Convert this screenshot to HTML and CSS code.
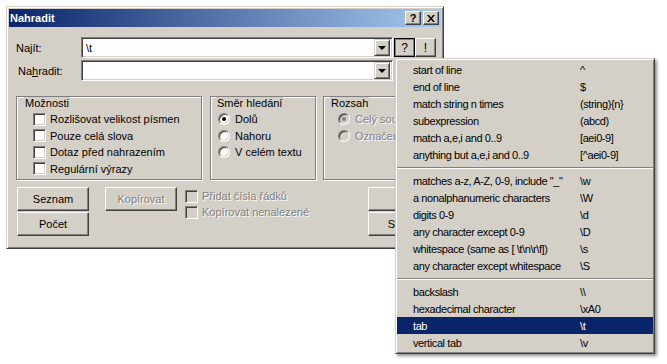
FILE: index.html
```html
<!DOCTYPE html>
<html lang="cs">
  <head>
    <meta charset="UTF-8" />
    <meta name="viewport" content="width=device-width, initial-scale=1.0" />
    <title>Nahradit</title>
    <link rel="stylesheet" href="styles.css">
  </head>
  <body>
    <div class="dialog">
      <div class="titlebar">
        <span class="title">Nahradit</span>
        <div class="tb-buttons">
          <span class="tb-btn">?</span>
          <span class="tb-btn">
            <svg width="8" height="7" viewBox="0 0 8 7">
              <path d="M0 0h2l2 2.5 2-2.5h2l-3 3.5 3 3.5h-2l-2-2.5-2 2.5h-2l3-3.5z" fill="#000"/>
            </svg>
          </span>
        </div>
      </div>

      <div class="dlg-body">
        <div class="field-row">
          <span class="field-label">Najít:</span>
          <div class="combo">
            <span class="combo-text">\t</span>
            <span class="drop-btn"><span class="arrow"></span></span>
          </div>
          <span class="btn btn-small pressed">?</span>
          <span class="btn btn-small">!</span>
        </div>
        <div class="field-row">
          <span class="field-label second">Na<u>h</u>radit:</span>
          <div class="combo">
            <span class="combo-text"></span>
            <span class="drop-btn"><span class="arrow"></span></span>
          </div>
        </div>

        <div class="groups">
          <div class="group g-options">
            <span class="legend">Možnosti</span>
            <div class="opt-list">
              <div class="opt"><span class="check"></span>Rozlišovat velikost písmen</div>
              <div class="opt"><span class="check"></span>Pouze celá slova</div>
              <div class="opt"><span class="check"></span>Dotaz před nahrazením</div>
              <div class="opt"><span class="check"></span>Regulární výrazy</div>
            </div>
          </div>
          <div class="group g-direction">
            <span class="legend">Směr hledání</span>
            <div class="opt-list">
              <div class="opt"><span class="radio checked"></span>Dolů</div>
              <div class="opt"><span class="radio"></span>Nahoru</div>
              <div class="opt"><span class="radio"></span>V celém textu</div>
            </div>
          </div>
          <div class="group g-scope">
            <span class="legend">Rozsah</span>
            <div class="opt-list">
              <div class="opt disabled"><span class="radio checked"></span>Celý soubor</div>
              <div class="opt disabled"><span class="radio"></span>Označený text</div>
            </div>
          </div>
        </div>

        <div class="bottom-row">
          <div class="btn-col">
            <span class="btn">Seznam</span>
            <span class="btn">Počet</span>
          </div>
          <span class="btn disabled copy-btn">Kopírovat</span>
          <div class="copy-opts">
            <div class="opt disabled"><span class="check"></span>Přidat čísla řádků</div>
            <div class="opt disabled"><span class="check"></span>Kopírovat nenalezené</div>
          </div>
          <div class="btn-col right-col">
            <span class="btn">OK</span>
            <span class="btn">Storno</span>
          </div>
        </div>
      </div>
    </div>

    <div class="popup-menu">
      <div class="menu-item"><span>start of line</span><span>^</span></div>
      <div class="menu-item"><span>end of line</span><span>$</span></div>
      <div class="menu-item"><span>match string n times</span><span>(string){n}</span></div>
      <div class="menu-item"><span>subexpression</span><span>(abcd)</span></div>
      <div class="menu-item"><span>match a,e,i and 0..9</span><span>[aei0-9]</span></div>
      <div class="menu-item"><span>anything but a,e,i and 0..9</span><span>[^aei0-9]</span></div>
      <div class="menu-sep"></div>
      <div class="menu-item"><span>matches a-z, A-Z, 0-9, include "_"</span><span>\w</span></div>
      <div class="menu-item"><span>a nonalphanumeric characters</span><span>\W</span></div>
      <div class="menu-item"><span>digits 0-9</span><span>\d</span></div>
      <div class="menu-item"><span>any character except 0-9</span><span>\D</span></div>
      <div class="menu-item"><span>whitespace (same as [ \t\n\r\f])</span><span>\s</span></div>
      <div class="menu-item"><span>any character except whitespace</span><span>\S</span></div>
      <div class="menu-sep"></div>
      <div class="menu-item"><span>backslash</span><span>\\</span></div>
      <div class="menu-item"><span>hexadecimal character</span><span>\xA0</span></div>
      <div class="menu-item active"><span>tab</span><span>\t</span></div>
      <div class="menu-item"><span>vertical tab</span><span>\v</span></div>
    </div>
  </body>
</html>
```

FILE: styles.css
```css
* {
  margin: 0;
  padding: 0;
  box-sizing: border-box;
}

body {
  background: #fff;
  font-family: "Liberation Sans", Arial, sans-serif;
  font-size: 11px;
  color: #000;
  width: 667px;
  height: 364px;
  overflow: hidden;
  padding: 6px 0 0 6px;
}

/* window frame */
.dialog {
  width: 438px;
  height: 243px;
  background: #d4d0c8;
  border: 1px solid;
  border-color: #d4d0c8 #404040 #404040 #d4d0c8;
  box-shadow: inset 1px 1px #fff, inset -1px -1px #808080;
  padding: 2px;
}

.titlebar {
  height: 18px;
  background: linear-gradient(to right, #0a246a, #a6caf0);
  display: flex;
  align-items: center;
  justify-content: space-between;
  padding: 0 2px 0 1px;
}

.title {
  color: #fff;
  font-weight: bold;
  font-size: 11px;
}

.tb-buttons {
  display: flex;
  gap: 2px;
}

.tb-btn {
  width: 16px;
  height: 14px;
  display: flex;
  align-items: center;
  justify-content: center;
  background: #d4d0c8;
  border: 1px solid;
  border-color: #fff #404040 #404040 #fff;
  box-shadow: inset -1px -1px #808080;
  font-weight: bold;
  font-size: 11px;
  line-height: 1;
}

.dlg-body {
  padding: 10px 0 0 7px;
}

.field-row {
  display: flex;
  align-items: center;
  height: 21px;
  margin-bottom: 2px;
}

.field-label {
  width: 65px;
}

.field-label.second {
  padding-left: 2px;
}

.combo {
  width: 312px;
  height: 21px;
  display: flex;
  align-items: center;
  background: #fff;
  border: 1px solid;
  border-color: #808080 #fff #fff #808080;
  box-shadow: inset 1px 1px #404040, inset -1px -1px #d4d0c8;
  padding: 2px 2px 2px 4px;
}

.combo-text {
  flex: 1;
}

.drop-btn {
  width: 16px;
  height: 17px;
  display: flex;
  align-items: center;
  justify-content: center;
  background: #d4d0c8;
  border: 1px solid;
  border-color: #d4d0c8 #404040 #404040 #d4d0c8;
  box-shadow: inset 1px 1px #fff, inset -1px -1px #808080;
}

.arrow {
  width: 0;
  height: 0;
  border-left: 4px solid transparent;
  border-right: 4px solid transparent;
  border-top: 4px solid #000;
  margin-top: 1px;
}

.btn {
  display: flex;
  align-items: center;
  justify-content: center;
  width: 72px;
  height: 24px;
  background: #d4d0c8;
  border: 1px solid;
  border-color: #fff #404040 #404040 #fff;
  box-shadow: inset -1px -1px #808080;
}

.btn-small {
  width: 21px;
  height: 19px;
  font-size: 12px;
}

.btn-small.pressed {
  margin-left: 1px;
  border-color: #000;
  box-shadow: inset 1px 1px #808080, inset -1px -1px #808080;
}

.btn.disabled {
  color: #808080;
  text-shadow: 1px 1px #fff;
}

/* group boxes */
.groups {
  display: flex;
  margin-top: 15px;
  height: 85px;
}

.group {
  height: 84px;
  border: 1px solid #808080;
  box-shadow: 1px 1px #fff, inset 1px 1px #fff;
}

.g-options {
  width: 186px;
  padding-left: 16px;
}

.g-direction {
  width: 106px;
  margin-left: 8px;
  padding-left: 7px;
}

.g-scope {
  width: 113px;
  margin-left: 7px;
  padding-left: 14px;
  overflow: hidden;
}

.legend {
  display: inline-block;
  background: #d4d0c8;
  height: 13px;
  line-height: 13px;
  margin-top: -7px;
  padding: 0 1px;
  position: relative;
}

.g-options .legend {
  margin-left: -9px;
}

.g-direction .legend {
  margin-left: -2px;
}

.g-scope .legend {
  margin-left: -8px;
}

.opt-list {
  margin-top: 1px;
}

.opt {
  display: flex;
  align-items: center;
  height: 16.5px;
  white-space: nowrap;
}

.opt.disabled {
  color: #808080;
  text-shadow: 1px 1px #fff;
}

.check {
  width: 13px;
  height: 13px;
  margin-right: 4px;
  background: #fff;
  border: 1px solid;
  border-color: #808080 #fff #fff #808080;
  box-shadow: inset 1px 1px #404040, inset -1px -1px #d4d0c8;
  flex: none;
}

.opt.disabled .check {
  background: #d4d0c8;
}

.radio {
  width: 12px;
  height: 12px;
  margin-right: 5px;
  border-radius: 50%;
  background: #fff;
  border: 1px solid;
  border-color: #808080 #fff #fff #808080;
  box-shadow: inset 1px 1px #404040, inset -1px -1px #d4d0c8;
  display: flex;
  align-items: center;
  justify-content: center;
  flex: none;
}

.radio.checked::after {
  content: "";
  width: 4px;
  height: 4px;
  border-radius: 50%;
  background: #000;
}

.opt.disabled .radio {
  background: #d4d0c8;
}

.opt.disabled .radio.checked::after {
  background: #808080;
}

/* bottom buttons */
.bottom-row {
  display: flex;
  margin-top: 6px;
  padding-left: 1px;
}

.btn-col {
  display: flex;
  flex-direction: column;
  gap: 1px;
}

.copy-btn {
  margin-left: 16px;
}

.copy-opts {
  margin-left: 8px;
  padding-top: 1px;
}

.copy-opts .opt {
  height: 16px;
}

.right-col {
  margin-left: auto;
  margin-right: 1px;
}

/* regex popup menu */
.popup-menu {
  position: absolute;
  left: 395px;
  top: 58px;
  width: 260px;
  background: #d4d0c8;
  border: 1px solid;
  border-color: #d4d0c8 #404040 #404040 #d4d0c8;
  box-shadow: inset 1px 1px #fff, inset -1px -1px #808080, 2px 2px 3px rgba(0, 0, 0, 0.45);
  padding: 2px 1px;
  letter-spacing: -0.4px;
}

.menu-item {
  display: grid;
  grid-template-columns: 167px auto;
  align-items: center;
  height: 17px;
  padding-left: 16px;
  white-space: nowrap;
}

.menu-item.active {
  background: #0a246a;
  color: #fff;
}

.menu-sep {
  height: 9px;
  padding-top: 4px;
}

.menu-sep::before {
  content: "";
  display: block;
  border-top: 1px solid #808080;
  border-bottom: 1px solid #fff;
}
```
